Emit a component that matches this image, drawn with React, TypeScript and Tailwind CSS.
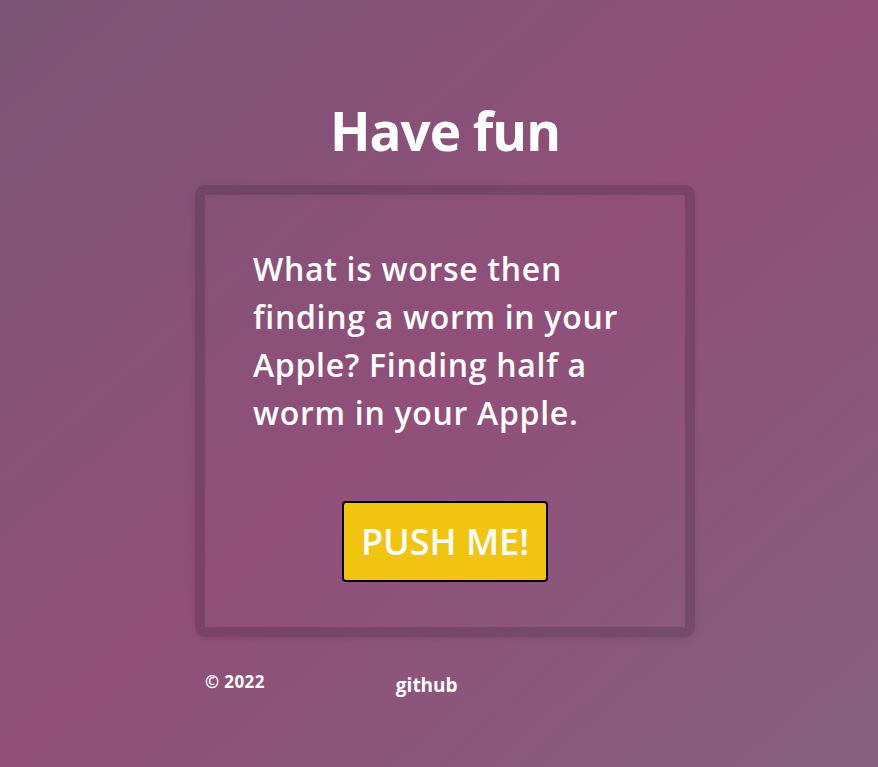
const App = () => {
  return (
    <div className="min-h-[767px] w-full bg-[linear-gradient(to_bottom_right,#7a5576,#914f79_50%,#84607f)] font-['Open_Sans',sans-serif] text-white">
      <div className="flex flex-col items-center pt-[96px] pl-[12px]">
        <h1 className="text-[53px] leading-[70px] font-bold tracking-[-1px]">Have fun</h1>
        <div className="mt-[19px] w-[500px] h-[452px] rounded-[10px] border-[10px] border-[#00000026] shadow-[0_2px_6px_rgba(0,0,0,0.1)] flex flex-col">
          <p className="ml-[48px] w-[384px] pt-[50px] text-[32px] leading-[48px] font-semibold tracking-[0.7px]">
            What is worse then finding a worm in your Apple? Finding half a worm in your Apple.
          </p>
          <div className="flex justify-center mt-[64px]">
            <button className="w-[206px] h-[81px] bg-[#f1c40f] border-2 border-black rounded-[4px] text-white text-[36px] font-semibold">
              PUSH ME!
            </button>
          </div>
        </div>
        <div className="w-[500px] flex pl-[10px] mt-[32px] font-bold">
          <span className="text-[17px] tracking-[0.4px]">© 2022</span>
          <a className="ml-[131px] mt-[2px] text-[19px]">github</a>
        </div>
      </div>
    </div>
  );
};

export default App;
